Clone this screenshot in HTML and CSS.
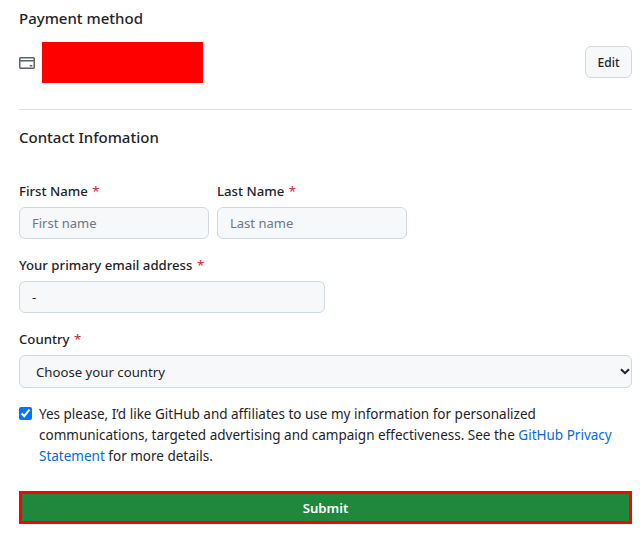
FILE: index.html
```html
<!DOCTYPE html>
<html lang="en">

<head>
	<meta charset="UTF-8">
	<meta name="viewport" content="width=device-width, initial-scale=1.0">
	<title>Payment and contact information</title>
	<link rel="stylesheet" href="styles.css">
</head>

<body>
	<div class="container">
		<h2 class="section-title">Payment method</h2>
		<div class="payment-row">
			<svg class="card-icon" width="16" height="16" viewBox="0 0 16 16" fill="#59636e">
				<path d="M0 3.75C0 2.784.784 2 1.75 2h12.5c.966 0 1.75.784 1.75 1.75v8.5A1.75 1.75 0 0 1 14.25 14H1.75A1.75 1.75 0 0 1 0 12.25ZM14.5 6.5h-13v5.75c0 .138.112.25.25.25h12.5a.25.25 0 0 0 .25-.25Zm0-2.75a.25.25 0 0 0-.25-.25H1.75a.25.25 0 0 0-.25.25V5h13Z"></path>
				<path d="M11.25 10h1.5a.75.75 0 0 1 0 1.5h-1.5a.75.75 0 0 1 0-1.5Z"></path>
			</svg>
			<div class="redacted"></div>
			<button class="edit-btn" type="button">Edit</button>
		</div>

		<hr class="divider">

		<h2 class="section-title contact-title">Contact Infomation</h2>

		<form>
			<div class="name-row">
				<div class="field">
					<label class="field-label">First Name <span class="required">*</span></label>
					<input class="text-input name-input" type="text" placeholder="First name">
				</div>
				<div class="field">
					<label class="field-label">Last Name <span class="required">*</span></label>
					<input class="text-input name-input" type="text" placeholder="Last name">
				</div>
			</div>

			<div class="field">
				<label class="field-label">Your primary email address <span class="required">*</span></label>
				<input class="text-input email-input" type="text" value="-">
			</div>

			<div class="field">
				<label class="field-label">Country <span class="required">*</span></label>
				<div class="select-wrap">
					<select class="country-select">
						<option>Choose your country</option>
					</select>
					<svg class="select-arrow" width="10" height="7" viewBox="0 0 10 7" fill="none" stroke="#1f2328" stroke-width="2">
						<path d="M1 1.2 5 5.2 9 1.2"></path>
					</svg>
				</div>
			</div>

			<div class="consent">
				<input class="consent-check" type="checkbox" checked>
				<p class="consent-text">Yes please, I’d like GitHub and affiliates to use my information for personalized communications, targeted advertising and campaign effectiveness. See the <a href="#">GitHub Privacy Statement</a> for more details.</p>
			</div>

			<button class="submit-btn" type="button">Submit</button>
		</form>
	</div>
</body>

</html>
```

FILE: styles.css
```css
body {
	font-family: 'Noto Sans', 'Open Sans', sans-serif;
	font-size: 14px;
	line-height: 21px;
	color: #1f2328;
	margin: 0;
	background-color: white;
}

.container {
	width: 613px;
	padding: 6px 0 0 19px;
}

.section-title {
	font-size: 15px;
	font-weight: 500;
	line-height: 24px;
	margin: 0;
}

.payment-row {
	display: flex;
	align-items: center;
	margin-top: 12px;
}

.redacted {
	width: 161px;
	height: 41px;
	margin-left: 7px;
	background-color: #ff0000;
}

.edit-btn {
	margin: 0 0 1px auto;
	width: 47px;
	height: 32px;
	padding: 0;
	font-family: inherit;
	font-size: 12px;
	font-weight: 500;
	color: #1f2328;
	background-color: #f6f8fa;
	border: 1px solid #d1d9e0;
	border-radius: 6px;
}

.divider {
	height: 1px;
	margin: 26px 0 0;
	border: none;
	background-color: #d8dee4;
}

.contact-title {
	margin-top: 15px;
	margin-bottom: 32px;
}

.name-row {
	display: flex;
	gap: 8px;
}

.field {
	margin-bottom: 16px;
}

.field-label {
	display: block;
	font-weight: 500;
	font-size: 13.2px;
	margin-bottom: 5px;
}

.required {
	margin-left: 1px;
	font-weight: 400;
	color: #d1242f;
}

.text-input {
	display: block;
	box-sizing: border-box;
	height: 32px;
	padding: 0 12px;
	font-family: inherit;
	font-size: 13px;
	color: #1f2328;
	background-color: #f6f8fa;
	border: 1px solid #d1d9e0;
	border-radius: 6px;
}

.text-input::placeholder {
	color: #6e7781;
}

.name-input {
	width: 190px;
}

.email-input {
	width: 306px;
}

.select-wrap {
	position: relative;
}

.country-select {
	display: block;
	box-sizing: border-box;
	width: 100%;
	height: 33px;
	padding: 0 16px;
	font-family: inherit;
	font-size: 13.2px;
	color: #1f2328;
	background-color: #f6f8fa;
	border: 1px solid #d1d9e0;
	border-radius: 6px;
	appearance: none;
}

.select-arrow {
	position: absolute;
	top: 13px;
	right: 2px;
}

.consent {
	display: flex;
}

.consent-check {
	width: 13px;
	height: 13px;
	margin: 3px 7px 0 0;
	flex-shrink: 0;
	accent-color: #0075ff;
}

.consent-text {
	margin: 0;
	font-size: 13.5px;
}

.consent-text a {
	color: #0969da;
	text-decoration: none;
}

.submit-btn {
	display: block;
	box-sizing: border-box;
	width: 100%;
	height: 33px;
	margin-top: 24px;
	padding: 0;
	font-family: inherit;
	font-size: 13.2px;
	font-weight: 600;
	color: white;
	background-color: #1f883d;
	border: 3px solid #ff0000;
	border-radius: 0;
}
```
